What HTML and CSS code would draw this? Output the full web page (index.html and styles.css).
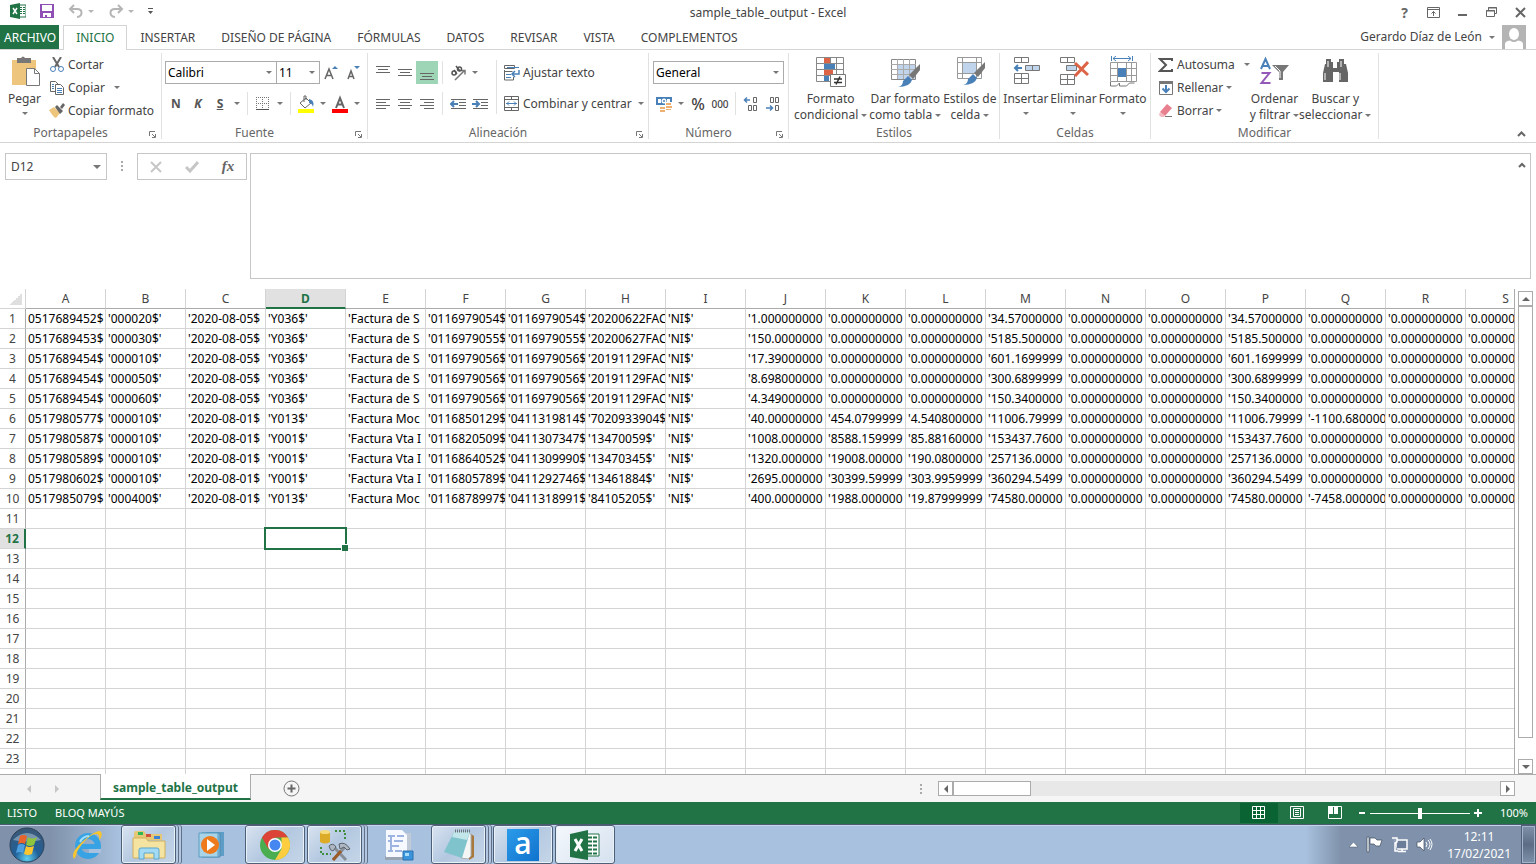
FILE: index.html
```html
<!DOCTYPE html>
<html lang="es">
<head>
    <meta charset="UTF-8">
    <meta name="viewport" content="width=device-width, initial-scale=1.0">
    <title>sample_table_output - Excel</title>
    <link rel="stylesheet" href="styles.css">
</head>
<body>
    <header class="titlebar">
        <div class="quick">
            <svg width="16" height="16" viewBox="0 0 16 16"><path d="M9 2h7v12H9z" fill="#fff" stroke="#217346"/><path d="M10 4.500h5M10 6.500h5M10 8.500h5M10 10.500h5" stroke="#217346" stroke-dasharray="2 1"/><path d="M0 2l10-2v16L0 14z" fill="#217346"/><path d="M3 5l4 6M7 5l-4 6" stroke="#fff" stroke-width="1.500"/></svg>
            <button class="quick-save" aria-label="Guardar"><svg width="14" height="14" viewBox="0 0 14 14"><path d="M0 0h14v14H0z" fill="#8f4fb5"/><path d="M2 1h10v6H2zM3 9h8v4H7v-2H5v2H3z" fill="#fff"/></svg></button>
            <button class="quick-undo" aria-label="Deshacer"><svg width="16" height="14" viewBox="0 0 16 14"><path d="M6 1L2 5l4 4M2 5h7c6 0 6 7 0 8" fill="none" stroke="#b5b5b5" stroke-width="2"/></svg><i class="caret light"></i></button>
            <button class="quick-redo" aria-label="Rehacer"><svg width="16" height="14" viewBox="0 0 16 14"><path d="M10 1l4 4-4 4M14 5H7c-6 0-6 7 0 8" fill="none" stroke="#b5b5b5" stroke-width="2"/></svg><i class="caret light"></i></button>
            <button class="quick-more" aria-label="Personalizar"><svg width="5" height="6" viewBox="0 0 5 6"><path d="M0 0h5v1H0zM0 3h5L2.500 6z" fill="#555"/></svg></button>
        </div>
        <div class="title">sample_table_output - Excel</div>
        <div class="window-buttons">
            <button class="help" aria-label="Ayuda">?</button>
            <button aria-label="Opciones de la cinta"><svg width="13" height="11" viewBox="0 0 13 11"><path d="M.5.500h12v10H.5zM0 2.500h13M6.500 9V4.500M4.500 6.500l2-2 2 2" fill="none" stroke="#666"/></svg></button>
            <button aria-label="Minimizar"><svg width="11" height="11" viewBox="0 0 11 11"><path d="M1 7h9v2H1z" fill="#666"/></svg></button>
            <button aria-label="Restaurar"><svg width="11" height="11" viewBox="0 0 11 11"><path d="M2.500 3V.5h8v6H8M.5 3.500h8v6h-8zM2 1h9M0 4h9" fill="none" stroke="#666"/></svg></button>
            <button aria-label="Cerrar"><svg width="11" height="11" viewBox="0 0 11 11"><path d="M1 1l9 9M10 1l-9 9" stroke="#666" stroke-width="2"/></svg></button>
        </div>
    </header>

    <nav class="tabs">
        <a href="#" class="file">ARCHIVO</a>
        <a href="#" class="active">INICIO</a>
        <a href="#">INSERTAR</a>
        <a href="#">DISEÑO DE PÁGINA</a>
        <a href="#">FÓRMULAS</a>
        <a href="#">DATOS</a>
        <a href="#">REVISAR</a>
        <a href="#">VISTA</a>
        <a href="#">COMPLEMENTOS</a>
        <button class="account">Gerardo Díaz de León<i class="caret"></i>
            <svg width="24" height="24" viewBox="0 0 24 24"><path d="M0 0h24v24H0z" fill="#b4b4b4"/><ellipse cx="12" cy="9" rx="5" ry="6" fill="#fff"/><path d="M3 24v-5q0-3 5-3.500q4 3 8 0q5 .5 5 3.500v5z" fill="#fff"/></svg>
        </button>
    </nav>

    <main class="ribbon">
        <section class="group clipboard">
            <div class="group-body">
                <button class="big">
                    <svg width="32" height="32" viewBox="0 0 32 32"><path d="M3 4h24v25H3z" fill="#edc57c"/><path d="M8 2h4q2-3 4 0h6v5H8z" fill="#777"/><path d="M17.500 12.500h8l5 5v12h-13z" fill="#fff" stroke="#777"/><path d="M25.500 12.500v5h5" fill="none" stroke="#777"/></svg>
                    <span>Pegar</span><i class="caret"></i>
                </button>
                <div class="list">
                    <button><svg width="16" height="16" viewBox="0 0 16 16"><path d="M4 0l6 10M12 0L6 10" stroke="#666" stroke-width="2"/><circle cx="4" cy="12" r="2.500" fill="none" stroke="#4a80b8"/><circle cx="12" cy="12" r="2.500" fill="none" stroke="#4a80b8"/></svg>Cortar</button>
                    <button><svg width="16" height="16" viewBox="0 0 16 16"><path d="M1.500 1.500h5l3 3v7h-8z" fill="#fff" stroke="#666"/><path d="M6.500 4.500h5l3 3v7h-8z" fill="#fff" stroke="#666"/><path d="M3 4.500h2M3 6.500h2M3 8.500h2M8 8.500h5M8 10.500h5M8 12.500h5" stroke="#4a80b8"/></svg>Copiar<i class="caret wide"></i></button>
                    <button><svg width="16" height="16" viewBox="0 0 16 16"><path d="M0 7l5-3 6 6-4 5q-3-1-7-8z" fill="#edc57c"/><path d="M6 4l2-2 6 6-3 3zM11 4l3-4 2 2-3 4z" fill="#666"/></svg>Copiar formato</button>
                </div>
            </div>
            <footer>Portapapeles<button class="launch" aria-label="Más de Portapapeles"><svg width="7" height="7" viewBox="0 0 7 7"><path d="M.5 5V.5H6M3 3l3 3M6.500 3v3.500H3" fill="none" stroke="#777"/></svg></button></footer>
        </section>

        <section class="group font">
            <div class="group-body rows">
                <div class="row">
                    <span class="combo family"><select aria-label="Fuente"><option>Calibri</option></select></span>
                    <span class="combo size"><select aria-label="Tamaño"><option>11</option></select></span>
                    <button class="tool grow" aria-label="Aumentar"><svg width="16" height="16" viewBox="0 0 16 16"><path d="M2 14l4-10 4 10M3 10.500h6" fill="none" stroke="#666" stroke-width="1.500"/><path d="M9 4l3-3 3 3z" fill="#4a80b8"/></svg></button>
                    <button class="tool" aria-label="Disminuir"><svg width="16" height="16" viewBox="0 0 16 16"><path d="M3 14l3-8 3 8M4 11.500h4" fill="none" stroke="#666" stroke-width="1.500"/><path d="M9 1l3 3 3-3z" fill="#4a80b8"/></svg></button>
                </div>
                <div class="row">
                    <button class="tool letter">N</button>
                    <button class="tool letter italic">K</button>
                    <button class="tool letter under">S</button>
                    <i class="caret"></i>
                    <i class="sep"></i>
                    <button class="tool" aria-label="Bordes"><svg width="14" height="14" viewBox="0 0 14 14"><path d="M.5 0v12M6.500 0v12M12.500 0v12M0 .5h13M0 6.500h13" stroke="#777" stroke-dasharray="1 1"/><path d="M0 12.500h13" stroke="#555"/></svg></button>
                    <i class="caret"></i>
                    <i class="sep"></i>
                    <button class="tool" aria-label="Relleno"><svg width="18" height="18" viewBox="0 0 18 18"><path d="M1 14h16v4H1z" fill="#ff0"/><path d="M3 8l6-5 5 5-6 5zM7 7V1h2v4" fill="#fff" stroke="#666"/><path d="M12 4q6 1 4 8q-1-4-4-4z" fill="#4a80b8"/></svg></button>
                    <i class="caret"></i>
                    <button class="tool" aria-label="Color de fuente"><svg width="18" height="18" viewBox="0 0 18 18"><path d="M1 14h16v4H1z" fill="red"/><path d="M5 13L9 3l4 10M6 9.500h6" fill="none" stroke="#666" stroke-width="2"/></svg></button>
                    <i class="caret"></i>
                </div>
            </div>
            <footer>Fuente<button class="launch" aria-label="Más de Fuente"><svg width="7" height="7" viewBox="0 0 7 7"><path d="M.5 5V.5H6M3 3l3 3M6.500 3v3.500H3" fill="none" stroke="#777"/></svg></button></footer>
        </section>

        <section class="group align">
            <div class="group-body">
                <div class="rows">
                    <div class="row">
                        <button class="tool" aria-label="Superior"><svg width="14" height="14" viewBox="0 0 14 14"><path d="M0 .5h14M2 3.500h10M0 6.500h14" stroke="#666"/></svg></button>
                        <button class="tool" aria-label="Medio"><svg width="14" height="14" viewBox="0 0 14 14"><path d="M0 3.500h14M2 6.500h10M0 9.500h14" stroke="#666"/></svg></button>
                        <button class="tool on" aria-label="Inferior"><svg width="14" height="14" viewBox="0 0 14 14"><path d="M0 7.500h14M2 10.500h10M0 13.500h14" stroke="#666"/></svg></button>
                        <i class="sep"></i>
                        <button class="tool" aria-label="Orientación"><svg width="17" height="16" viewBox="0 0 17 16"><path d="M5 15L14 6M11 5.500h4v4" fill="none" stroke="#777" stroke-width="1.500"/><circle cx="4" cy="8" r="2" fill="none" stroke="#555" stroke-width="1.500"/><path d="M4 5l3 4M6 1l4 5" stroke="#555" stroke-width="1.500"/><circle cx="9.500" cy="4" r="2" fill="none" stroke="#555" stroke-width="1.500"/></svg></button>
                        <i class="caret"></i>
                    </div>
                    <div class="row">
                        <button class="tool" aria-label="Izquierda"><svg width="14" height="14" viewBox="0 0 14 14"><path d="M0 2.500h14M0 5.500h10M0 8.500h14M0 11.500h10" stroke="#666"/></svg></button>
                        <button class="tool" aria-label="Centro"><svg width="14" height="14" viewBox="0 0 14 14"><path d="M0 2.500h14M2 5.500h10M0 8.500h14M2 11.500h10" stroke="#666"/></svg></button>
                        <button class="tool" aria-label="Derecha"><svg width="14" height="14" viewBox="0 0 14 14"><path d="M0 2.500h14M4 5.500h10M0 8.500h14M4 11.500h10" stroke="#666"/></svg></button>
                        <i class="sep"></i>
                        <button class="tool" aria-label="Disminuir sangría"><svg width="16" height="14" viewBox="0 0 16 14"><path d="M1 2.500h15M9 5.500h7M9 8.500h7M1 11.500h15" stroke="#666"/><path d="M8 7H1M4 4L1 7l3 3" fill="none" stroke="#4a80b8" stroke-width="2"/></svg></button>
                        <button class="tool" aria-label="Aumentar sangría"><svg width="16" height="14" viewBox="0 0 16 14"><path d="M1 2.500h15M9 5.500h7M9 8.500h7M1 11.500h15" stroke="#666"/><path d="M0 7h7M4 4l3 3-3 3" fill="none" stroke="#4a80b8" stroke-width="2"/></svg></button>
                    </div>
                </div>
                <i class="sep tall"></i>
                <div class="rows">
                    <button class="row wide-tool"><svg width="16" height="16" viewBox="0 0 16 16"><path d="M.5.500h10v3H.5zM.5 6.500h8M.5 5v10h9v-3" fill="none" stroke="#666"/><path d="M3 2.500h12M2 9.500h5M2 12.500h5" stroke="#4a80b8"/><path d="M15 5v4H9M11 6L8 9l3 3" fill="none" stroke="#4a80b8" stroke-width="1.500"/></svg>Ajustar texto</button>
                    <button class="row wide-tool"><svg width="16" height="16" viewBox="0 0 16 16"><path d="M.5.500h14v14H.5zM0 3.500h15M0 11.500h15M7.500 0v3M7.500 12v3" fill="none" stroke="#666"/><path d="M2 7.500h11M5 5.500l-2 2 2 2M10 5.500l2 2-2 2" fill="none" stroke="#4a80b8"/></svg>Combinar y centrar<i class="caret wide"></i></button>
                </div>
            </div>
            <footer>Alineación<button class="launch" aria-label="Más de Alineación"><svg width="7" height="7" viewBox="0 0 7 7"><path d="M.5 5V.5H6M3 3l3 3M6.500 3v3.500H3" fill="none" stroke="#777"/></svg></button></footer>
        </section>

        <section class="group number">
            <div class="group-body rows">
                <div class="row">
                    <span class="combo format"><select aria-label="Formato de número"><option>General</option></select></span>
                </div>
                <div class="row">
                    <button class="tool" aria-label="Moneda"><svg width="17" height="16" viewBox="0 0 17 16"><path d="M0 1h16v8H0z" fill="#4a80b8"/><path d="M2 3h3v4H2zM11 3h3v4h-3z" fill="#fff"/><circle cx="8" cy="5" r="2.500" fill="#fff"/><circle cx="8" cy="5" r="1" fill="#4a80b8"/><path d="M9 6h8v10H9zM3 10h7v6H3z" fill="#fff"/><path d="M10 7h5v2h-5zM10 10h6v2h-6zM10 13h5v1h-5zM4 11h5v2H4zM4 14h5v2H4z" fill="#edb070"/></svg></button>
                    <i class="caret"></i>
                    <button class="tool percent">%</button>
                    <button class="tool thousands">000</button>
                    <i class="sep"></i>
                    <button class="tool" aria-label="Aumentar decimales"><svg width="16" height="16" viewBox="0 0 16 16"><path d="M7 4H1M4 1.500L1.500 4 4 6.500" fill="none" stroke="#4a80b8" stroke-width="1.500"/><path d="M10.500 1.500h3v5h-3zM5.500 9.500h3v5h-3zM10.500 9.500h3v5h-3z" fill="none" stroke="#666"/></svg></button>
                    <button class="tool" aria-label="Disminuir decimales"><svg width="16" height="16" viewBox="0 0 16 16"><path d="M1 12h7M5 9.500L7.500 12 5 14.500" fill="none" stroke="#4a80b8" stroke-width="1.500"/><path d="M5.500 1.500h3v5h-3zM10.500 1.500h3v5h-3zM10.500 9.500h3v5h-3z" fill="none" stroke="#666"/></svg></button>
                </div>
            </div>
            <footer>Número<button class="launch" aria-label="Más de Número"><svg width="7" height="7" viewBox="0 0 7 7"><path d="M.5 5V.5H6M3 3l3 3M6.500 3v3.500H3" fill="none" stroke="#777"/></svg></button></footer>
        </section>

        <section class="group styles">
            <div class="group-body">
                <button class="big">
                    <svg width="32" height="32" viewBox="0 0 32 32"><path d="M1.500 1.500h27v24h-27zM1 7.500h27M1 13.500h27M1 19.500h27M9.500 1v24M15.500 1v24M21.500 1v24" fill="#fff" stroke="#888"/><path d="M9 2h6v5H9zM9 14h9v5H9z" fill="#dc6345"/><path d="M9 8h11v5H9zM9 20h5v5H9z" fill="#4a80b8"/><path d="M15.500 18.500h15v12h-15z" fill="#fff" stroke="#777"/><path d="M19 23h8M19 26.500h8M25 20.500l-4 8" stroke="#333" stroke-width="1.500"/></svg>
                    <span>Formato<br>condicional<i class="caret"></i></span>
                </button>
                <button class="big">
                    <svg width="32" height="32" viewBox="0 0 32 32"><path d="M2.500 3.500h24v20h-24z" fill="#fff" stroke="#888"/><path d="M8 8h18v15H8z" fill="#c0d4ec"/><path d="M2 8.500h25M2 13.500h25M2 18.500h25M8.500 3v20M14.500 3v20M20.500 3v20" stroke="#aaa"/><path d="M31 8v6l-7 9-4-4z" fill="#777"/><path d="M19 20l4 4q-2 7-14 7q5-1 5-6z" fill="#4a80b8"/></svg>
                    <span>Dar formato<br>como tabla<i class="caret"></i></span>
                </button>
                <button class="big">
                    <svg width="32" height="32" viewBox="0 0 32 32"><path d="M3.500 1.500h24v21h-24zM3 6.500h25M3 17.500h25M8.500 1v21M22.500 1v21" fill="#fff" stroke="#999"/><path d="M9 7h13v10H9z" fill="#c0d4ec"/><path d="M31 6v6l-7 9-4-4z" fill="#777"/><path d="M19 18l4 4q-2 7-14 7q5-1 5-6z" fill="#4a80b8"/></svg>
                    <span>Estilos de<br>celda<i class="caret"></i></span>
                </button>
            </div>
            <footer>Estilos</footer>
        </section>

        <section class="group cells">
            <div class="group-body">
                <button class="big">
                    <svg width="32" height="32" viewBox="0 0 32 32"><path d="M4.500 1.500h14v5h-14zM11.500 1v5M4.500 17.500h14v10h-14zM4 22.500h15M11.500 17v11" fill="none" stroke="#777"/><path d="M15.500 9.500h14v5h-14z" fill="#c0d4ec" stroke="#777"/><path d="M22.500 9v6" stroke="#777"/><path d="M12 12H5M8 9l-3 3 3 3" fill="none" stroke="#4a80b8" stroke-width="2"/></svg>
                    <span>Insertar</span><i class="caret"></i>
                </button>
                <button class="big">
                    <svg width="32" height="32" viewBox="0 0 32 32"><path d="M3.500 1.500h14v5h-14zM10.500 1v5M3.500 18.500h14v10h-14zM3 23.500h15M10.500 18v11" fill="none" stroke="#777"/><path d="M9.500 9.500h10v5h-10z" fill="#c0d4ec" stroke="#777"/><path d="M18 7l13 12M31 6L18 20" stroke="#dc6345" stroke-width="3"/></svg>
                    <span>Eliminar</span><i class="caret"></i>
                </button>
                <button class="big">
                    <svg width="32" height="32" viewBox="0 0 32 32"><path d="M3.500 6.500h26v19h-26zM3 12.500h26M3 19.500h26M10.500 6v19M19.500 6v19M24.500 6v19" fill="none" stroke="#999"/><path d="M11 12h8v9h-8z" fill="#4a80b8"/><path d="M4.500 0v5M25.500 0v5M6 2.500h18M9 0L6 2.500 9 5M21 0l3 2.500L21 5" fill="none" stroke="#4a80b8"/><path d="M3.500 26v4h6l3-3v3h7l3-3h5" fill="none" stroke="#777"/></svg>
                    <span>Formato</span><i class="caret"></i>
                </button>
            </div>
            <footer>Celdas</footer>
        </section>

        <section class="group edit">
            <div class="group-body">
                <div class="list">
                    <button><svg width="16" height="16" viewBox="0 0 16 16"><path d="M14 4V2H2l6 6-6 6h12v-2" fill="none" stroke="#555" stroke-width="2"/></svg>Autosuma<i class="caret wide"></i></button>
                    <button><svg width="16" height="16" viewBox="0 0 16 16"><path d="M1.500 1.500h13v13h-13z" fill="#fff" stroke="#777"/><path d="M1 1h14v3H1z" fill="#777"/><path d="M8 5v7M4.500 8.500L8 12l3.500-3.500" fill="none" stroke="#4a80b8" stroke-width="2"/></svg>Rellenar<i class="caret"></i></button>
                    <button><svg width="16" height="16" viewBox="0 0 16 16"><path d="M9 1l5 4-7 8-5-4z" fill="#e8808f"/><path d="M2 9l5 4-1 1H3L1 12z" fill="#f3b8c0"/><path d="M7 13.500h7" stroke="#777"/></svg>Borrar<i class="caret"></i></button>
                </div>
                <button class="big">
                    <svg width="32" height="32" viewBox="0 0 32 32"><path d="M3 13L7.500 3 12 13M5 10h6" fill="none" stroke="#4a80b8" stroke-width="2"/><path d="M3.500 17h8l-8 10h9" fill="none" stroke="#9459b8" stroke-width="2"/><path d="M14 9h17l-6 7v8h-4v-8z" fill="#777"/><path d="M17 10l5 5v7" fill="none" stroke="#fff"/></svg>
                    <span>Ordenar<br>y filtrar<i class="caret"></i></span>
                </button>
                <button class="big">
                    <svg width="32" height="32" viewBox="0 0 32 32"><path d="M7 3h5v3h2v6h4V6h2V3h5v5h2l2 9v9h-9v-10h-6v10H4v-9l2-9h1z" fill="#666"/><path d="M9 5v6M6 17v7M22 5v6M21 17v7" stroke="#fff"/></svg>
                    <span>Buscar y<br>seleccionar<i class="caret"></i></span>
                </button>
            </div>
            <footer>Modificar</footer>
        </section>
        <button class="collapse" aria-label="Contraer la cinta"><svg width="9" height="6" viewBox="0 0 9 6"><path d="M1 5l3.500-3.500L8 5" fill="none" stroke="#666" stroke-width="2"/></svg></button>
    </main>

    <section class="formula">
        <span class="namebox"><input type="text" value="D12" aria-label="Cuadro de nombres"><i class="caret large"></i></span>
        <span class="dots"></span>
        <div class="formula-buttons">
            <button aria-label="Cancelar"><svg width="12" height="12" viewBox="0 0 12 12"><path d="M1 1l10 10M11 1L1 11" stroke="#c6c6c6" stroke-width="2"/></svg></button>
            <button aria-label="Introducir"><svg width="14" height="12" viewBox="0 0 14 12"><path d="M1 6l4 4 8-9" fill="none" stroke="#c6c6c6" stroke-width="3"/></svg></button>
            <button class="fx">fx</button>
        </div>
        <div class="formula-input">
            <textarea aria-label="Barra de fórmulas"></textarea>
            <button aria-label="Contraer"><svg width="8" height="6" viewBox="0 0 8 6"><path d="M1 5l3-3 3 3" fill="none" stroke="#666" stroke-width="2"/></svg></button>
        </div>
    </section>

    <section class="sheet">
        <div class="grid">
            <table>
                <thead><tr id="columns"></tr></thead>
                <tbody id="cells"></tbody>
            </table>
        </div>
        <div class="scroll vertical">
            <button aria-label="Arriba"><i class="arrow up"></i></button>
            <span class="thumb"></span>
            <span class="track"></span>
            <button aria-label="Abajo"><i class="arrow down"></i></button>
        </div>
    </section>

    <section class="sheetbar">
        <div class="sheet-nav">
            <button aria-label="Hoja anterior"><i class="arrow left pale"></i></button>
            <button aria-label="Hoja siguiente"><i class="arrow right pale"></i></button>
        </div>
        <a href="#" class="sheet-tab">sample_table_output</a>
        <button class="sheet-add" aria-label="Hoja nueva"><svg width="17" height="17" viewBox="0 0 17 17"><circle cx="8.500" cy="8.500" r="7.500" fill="none" stroke="#777"/><path d="M8.500 4.500v8M4.500 8.500h8" stroke="#666" stroke-width="2"/></svg></button>
        <span class="dots"></span>
        <div class="scroll horizontal">
            <button aria-label="Izquierda"><i class="arrow left"></i></button>
            <span class="thumb"></span>
            <span class="track"></span>
            <button aria-label="Derecha"><i class="arrow right"></i></button>
        </div>
    </section>

    <section class="status">
        <span>LISTO</span>
        <span>BLOQ MAYÚS</span>
        <div class="views">
            <button class="on" aria-label="Normal"><svg width="14" height="14" viewBox="0 0 14 14"><path d="M.5.500h12v12H.5zM0 4.500h13M0 8.500h13M4.500 0v13M8.500 0v13" fill="none" stroke="#fff"/></svg></button>
            <button aria-label="Diseño de página"><svg width="14" height="14" viewBox="0 0 14 14"><path d="M.5.500h13v12H.5zM3.500 2.500h7v8h-7zM5 4.500h4M5 6.500h4M5 8.500h4" fill="none" stroke="#fff"/></svg></button>
            <button aria-label="Salto de página"><svg width="14" height="14" viewBox="0 0 14 14"><path d="M.5.500h13v12H.5z" fill="none" stroke="#fff"/><path d="M0 0h5v8H0zM6 0h4v8H6z" fill="#fff"/></svg></button>
        </div>
        <div class="zoom-box">
            <button aria-label="Alejar"><svg width="8" height="8" viewBox="0 0 8 8"><path d="M1 3h6v2H1z" fill="#fff"/></svg></button>
            <input class="zoom" type="range" min="0" max="100" value="50" aria-label="Zoom">
            <button aria-label="Acercar"><svg width="8" height="8" viewBox="0 0 8 8"><path d="M0 3h8v2H0zM3 0h2v8H3z" fill="#fff"/></svg></button>
        </div>
        <span>100%</span>
    </section>

    <footer class="taskbar">
        <button class="start" aria-label="Inicio">
            <svg width="36" height="36" viewBox="0 0 36 36"><defs><radialGradient id="orb" cx=".5" cy=".9" r=".9"><stop offset="0" stop-color="#5fd0f0"/><stop offset=".4" stop-color="#20609a"/><stop offset="1" stop-color="#3d5874"/></radialGradient></defs><circle cx="18" cy="18" r="17" fill="url(#orb)" stroke="#2b4058"/><path d="M4 13q14-14 28 0q-14 3-28 0z" fill="#fff" opacity=".35"/><path d="M11 9q3-2 7 0l-2 8q-3-2-7 0z" fill="#e8642c"/><path d="M19 10q4 3 9 0l-3 8q-4 2-8 0z" fill="#8fc43f"/><path d="M9 18q3-2 7 0l-2 8q-3-2-7 0z" fill="#4e9fe0"/><path d="M17 19q3 2 8 0l-2 8q-4 2-8 0z" fill="#fbc52f"/></svg>
        </button>
        <button class="task" aria-label="Internet Explorer">
            <svg width="32" height="32" viewBox="0 0 32 32"><circle cx="17" cy="17" r="10" fill="none" stroke="#38a3e4" stroke-width="6"/><path d="M10 15h18v5H10z" fill="#38a3e4"/><path d="M18 20h12v4H18z" fill="#a8c1de"/><path d="M3 30q-4-6 8-17T29 2q4 3-1 10q1-6-2-7q-5-1-13 8T5 27z" fill="#f7c52e"/><path d="M9 13q3-6 9-6" fill="none" stroke="#a6e0fa" stroke-width="2"/></svg>
        </button>
        <button class="task open stack" aria-label="Explorador">
            <svg width="34" height="32" viewBox="0 0 34 32"><path d="M2 4q0-2 2-2h8l2 3h16v6H2z" fill="#e4c877"/><path d="M6 3h5v3H6z" fill="#2fb457"/><path d="M14 5h5v3h-5z" fill="#d2503c"/><path d="M22 7h6v3h-6z" fill="#3c82d2"/><path d="M1 9h13l2 3h17v16q0 1-1 1H2q-1 0-1-1z" fill="#f4e3a1" stroke="#d0b05c"/><path d="M7 30V21q0-2 2-2h16q2 0 2 2v9h-5v-6H12v6z" fill="#a3dbf5" stroke="#5ba6cc"/></svg>
        </button>
        <button class="task" aria-label="Reproductor">
            <svg width="30" height="28" viewBox="0 0 30 28"><path d="M8 1h18v24H8z" fill="#5e9dc6"/><path d="M4 2h18v24H4z" fill="#88bfdd" stroke="#4d8ab2"/><path d="M1 2h19v24H1z" fill="#a9d4e8" stroke="#5a9cc2"/><circle cx="12" cy="14" r="9" fill="#ee7a1c"/><path d="M9 8l8 6-8 6z" fill="#fff"/></svg>
        </button>
        <button class="task open" aria-label="Chrome">
            <svg width="30" height="30" viewBox="0 0 30 30"><circle cx="15" cy="15" r="15" fill="#4aae50"/><path d="M2 7.500A15 15 0 0 1 28 7.500H15L8.500 19z" fill="#dc4437"/><path d="M28 7.500A15 15 0 0 1 15 30l6.500-11V7.500z" fill="#fccd3f"/><circle cx="15" cy="15" r="7" fill="#fff"/><circle cx="15" cy="15" r="5.500" fill="#4586f1"/></svg>
        </button>
        <button class="task open stack" aria-label="Herramientas">
            <svg width="32" height="34" viewBox="0 0 32 34"><path d="M1 4v10q5 3 10 0V4z" fill="#dcab27"/><ellipse cx="6" cy="4" rx="5" ry="2" fill="#f6dc7c"/><path d="M16 3h10v10M2 19v7h10" fill="none" stroke="#3e8e3e" stroke-width="2" stroke-dasharray="2 2"/><path d="M13 17l14 15M27 18L14 32" stroke="#888e98" stroke-width="3"/><path d="M10 18q4-4 7 1l-3 4q-3 0-4-5zM20 16q6-3 11 5l-3 1-3-3-4 2z" fill="#aeb6c2" stroke="#5a626e"/><path d="M22 23L14 32" stroke="#9c5a28" stroke-width="3"/></svg>
        </button>
        <button class="task" aria-label="Documento">
            <svg width="30" height="32" viewBox="0 0 30 32"><path d="M1 27h24v4H1z" fill="#9aa5b4"/><path d="M22 4h5v24h-5z" fill="#c0c9d6"/><path d="M2 1h16l5 5v22H2z" fill="#f6f9ff"/><path d="M4 7h7M13 7h7M4 12h4M10 12h9M7 17h8M4 22h5M11 22h7M7 7v15" fill="none" stroke="#9db4e0" stroke-width="2"/><path d="M19 22h10v9H19z" fill="#3b95dc" stroke="#2871b0"/><path d="M21 24h4v3h-4z" fill="#a8dcf8"/></svg>
        </button>
        <button class="task open stack" aria-label="Bloc de notas">
            <svg width="32" height="32" viewBox="0 0 32 32"><path d="M28 5l3 2v21l-5 3z" fill="#a8783c"/><path d="M24 4l4 1v22l-3 3-7-1z" fill="#f4f6f6" stroke="#a8b0b4"/><path d="M11 3h16l-8 26-18-6z" fill="#7fc3cc"/><path d="M11 3h16l-3 8-15-3z" fill="#c2e6ea"/><path d="M12 2h15" stroke="#68777c" stroke-width="3" stroke-dasharray="1 1"/></svg>
        </button>
        <button class="task open"><span class="app-a">a</span></button>
        <button class="task open current" aria-label="Excel">
            <svg width="30" height="30" viewBox="0 0 30 30"><path d="M16 4h13v22H16z" fill="#fff" stroke="#217346"/><path d="M18 7.500h9M18 11.500h9M18 15.500h9M18 19.500h9M18 23.500h9" stroke="#217346" stroke-width="2" stroke-dasharray="4 1"/><path d="M0 4l18-4v30L0 27z" fill="#217346"/><path d="M5 9l7 12M12 9L5 21" stroke="#fff" stroke-width="3"/></svg>
        </button>
        <div class="tray">
            <button aria-label="Iconos ocultos"><svg width="9" height="6" viewBox="0 0 9 6"><path d="M0 5l4.500-5L9 5z" fill="#fff" stroke="#44546a" stroke-width=".5"/></svg></button>
            <button aria-label="Centro de actividades"><svg width="17" height="17" viewBox="0 0 17 17"><path d="M1 1h2v15H1zM4 2h5l2 2h5l-2 6h-4L8 8H4z" fill="#fff" stroke="#3d4b60" stroke-width=".7"/></svg></button>
            <button aria-label="Red"><svg width="17" height="17" viewBox="0 0 17 17"><path d="M5 4h11v9H5zM7 15.500h8M11 13v2" fill="#6b7d98" stroke="#fff" stroke-width="1.500"/><path d="M1 2h5v4l-2 1v8h3" fill="#8fa0b8" stroke="#fff" stroke-width="1.500"/></svg></button>
            <button aria-label="Volumen"><svg width="17" height="17" viewBox="0 0 17 17"><path d="M1 6h3l4-4v13l-4-4H1z" fill="#fff" stroke="#3d4b60" stroke-width=".7"/><path d="M10 6q2 2.500 0 5M12 4q4 4 0 9M14 3q4 5 0 11" fill="none" stroke="#fff"/></svg></button>
        </div>
        <div class="clock">12:11<br>17/02/2021</div>
        <button class="desktop" aria-label="Mostrar escritorio"></button>
    </footer>
    <script src="script.js"></script>
</body>
</html>
```

FILE: styles.css
```css
* {
    box-sizing: border-box;
}
body {
    display: flex;
    flex-direction: column;
    height: 100vh;
    margin: 0;
    overflow: hidden;
    font-family: "Noto Sans", "Open Sans", sans-serif;
    font-size: 12px;
    line-height: 16px;
    color: #444;
    background-color: #fff;
}
button, input, select, textarea {
    margin: 0;
    padding: 0;
    border: none;
    background: none;
    font: inherit;
    color: inherit;
}
button {
    display: flex;
    align-items: center;
    justify-content: center;
}
a {
    color: inherit;
    text-decoration: none;
}
svg {
    display: block;
    flex: none;
}

/* small drop-down arrows */
.caret {
    flex: none;
    display: inline-block;
    border: 3px solid transparent;
    border-top-color: #777;
    border-bottom: none;
    vertical-align: middle;
}
.caret.light {
    border-top-color: #b5b5b5;
}
.caret.large {
    border-width: 4px;
    border-bottom: none;
}
.caret.wide {
    margin-left: 6px;
}

/* title bar */
.titlebar {
    flex: none;
    display: grid;
    grid-template-columns: 1fr auto 1fr;
    align-items: center;
    height: 25px;
}
.quick {
    display: flex;
    align-items: center;
    gap: 14px;
    padding-left: 10px;
    padding-bottom: 3px;
}
.quick-undo, .quick-redo {
    gap: 4px;
}
.window-buttons {
    display: flex;
    justify-content: flex-end;
    padding-right: 1px;
}
.window-buttons button {
    width: 29px;
    height: 20px;
}
.window-buttons .help {
    font-size: 14px;
    font-weight: bold;
    color: #666;
}

/* ribbon tabs */
.tabs {
    flex: none;
    display: flex;
    height: 25px;
    border-bottom: 1px solid #d4d4d4;
}
.tabs a {
    padding: 5px 13px 0;
    height: 24px;
}
.tabs .file {
    padding: 5px 3px 0 4px;
    margin-right: 4px;
    background-color: #217346;
    color: #fff;
}
.tabs .active {
    height: 25px;
    padding: 4px 12px 0;
    border: 1px solid #d4d4d4;
    border-bottom: none;
    background-color: #fff;
    color: #217346;
}
.account {
    margin-left: auto;
    padding-right: 10px;
    gap: 7px;
}

/* ribbon */
.ribbon {
    flex: none;
    display: flex;
    height: 93px;
    border-bottom: 1px solid #d4d4d4;
}
.group {
    display: flex;
    flex-direction: column;
    justify-content: space-between;
    margin: 3px 0;
    border-right: 1px solid #e1e1e1;
}
.clipboard {
    width: 162px;
}
.font {
    width: 206px;
}
.align {
    width: 281px;
}
.number {
    width: 140px;
}
.styles {
    width: 211px;
}
.cells {
    width: 151px;
}
.edit {
    width: 228px;
}
.group-body {
    display: flex;
    height: 72px;
}
.group footer {
    position: relative;
    padding-right: 20px;
    line-height: 12px;
    text-align: center;
    color: #666;
}
.styles footer, .cells footer, .edit footer {
    padding-right: 0;
}
.launch {
    position: absolute;
    right: 5px;
    top: 4px;
}
.big {
    flex-direction: column;
    justify-content: flex-start;
    padding-top: 3px;
    white-space: nowrap;
}
.big span {
    margin-top: 3px;
}
.big > .caret {
    margin-top: 5px;
}
.big span .caret {
    margin-left: 3px;
}
.clipboard .big {
    width: 49px;
}
.list button {
    height: 23px;
    gap: 3px;
    white-space: nowrap;
}
.rows {
    display: flex;
    flex-direction: column;
    gap: 8px;
    padding-top: 8px;
}
.row {
    display: flex;
    align-items: center;
    height: 23px;
}
.row > .caret {
    margin: 0 3px;
}
.tool {
    flex: none;
    width: 22px;
    height: 23px;
}
.on {
    background-color: #9fd5b7;
}
.sep {
    flex: none;
    width: 1px;
    height: 23px;
    margin: 0 4px;
    background-color: #e1e1e1;
}
.sep.tall {
    height: 54px;
    margin: 7px 7px 0 1px;
}
.combo {
    position: relative;
    height: 23px;
    border: 1px solid #ababab;
    color: #000;
}
.combo select {
    width: 100%;
    height: 100%;
    padding-left: 2px;
    appearance: none;
}
.combo::after {
    content: "";
    position: absolute;
    right: 4px;
    top: 9px;
    border: 3px solid transparent;
    border-top-color: #777;
    border-bottom: none;
}
.family {
    width: 112px;
}
.size {
    width: 43px;
    border-left: none;
}
.format {
    width: 131px;
}
.font .group-body {
    padding-left: 3px;
}
.letter {
    font-weight: bold;
    color: #555;
}
.italic {
    font-style: italic;
}
.under {
    text-decoration: underline;
}
.align .group-body {
    padding-left: 4px;
}
.align .rows:first-child {
    width: 123px;
}
.wide-tool {
    gap: 3px;
    justify-content: flex-start;
    white-space: nowrap;
}
.number .group-body {
    padding-left: 4px;
}
.percent {
    font-size: 16px;
    font-weight: 500;
}
.thousands {
    font-size: 10px;
    font-weight: 500;
}
.styles .group-body {
    padding-left: 5px;
    gap: 2px;
}
.cells .group-body {
    justify-content: center;
    gap: 2px;
}
.edit .group-body {
    padding-left: 7px;
}
.list button {
    justify-content: flex-start;
}
.collapse {
    margin-left: auto;
    align-self: flex-end;
    padding: 5px 10px;
}

/* formula bar */
.formula {
    flex: none;
    display: flex;
    align-items: flex-start;
    height: 146px;
    padding: 10px 5px;
}
.namebox {
    display: flex;
    align-items: center;
    width: 102px;
    height: 27px;
    padding: 0 5px;
    border: 1px solid #c6c6c6;
}
.namebox input {
    flex: 1;
    min-width: 0;
}
.dots {
    width: 2px;
    height: 10px;
    background: repeating-linear-gradient(#aaa 0 2px, transparent 2px 4px);
}
.formula .dots {
    margin: 8px 14px;
}
.formula-buttons {
    display: flex;
    width: 110px;
    height: 27px;
    margin-right: 3px;
    border: 1px solid #c6c6c6;
}
.formula-buttons button {
    flex: 1;
}
.formula-buttons .fx {
    font: italic bold 15px "Liberation Serif", serif;
    color: #666;
}
.formula-input {
    flex: 1;
    display: flex;
    align-items: flex-start;
    height: 126px;
    border: 1px solid #c6c6c6;
}
.formula-input textarea {
    flex: 1;
    height: 100%;
    resize: none;
}
.formula-input button {
    padding: 8px 4px;
}

/* sheet */
.sheet {
    flex: 1;
    min-height: 0;
    display: flex;
}
.grid {
    flex: 1;
    min-width: 0;
    overflow: hidden;
    border-right: 1px solid #ababab;
    color: #000;
}
table {
    width: 1546px;
    table-layout: fixed;
    border-collapse: separate;
    border-spacing: 0;
}
th, td {
    width: 80px;
    height: 20px;
    padding: 1px 0 0 2px;
    border-right: 1px solid #d4d4d4;
    border-bottom: 1px solid #d4d4d4;
    line-height: 18px;
    text-align: left;
    white-space: nowrap;
    overflow: hidden;
}
th {
    padding: 1px 0 0;
    font-weight: normal;
    text-align: center;
    color: #444;
}
thead th {
    padding: 0;
    border-bottom-color: #ababab;
}
th:first-child {
    width: 26px;
    border-right-color: #ababab;
}
thead th:first-child {
    border-right-color: #d4d4d4;
    border-bottom-color: #d4d4d4;
    background: linear-gradient(135deg, transparent 50%, #dfdfdf 50%) 10px 4px / 12px 12px no-repeat;
}
th.current {
    background-color: #e1e1e1;
    color: #217346;
    font-weight: bold;
}
thead th.current {
    border-bottom: 2px solid #217346;
    line-height: 17px;
}
tbody th.current {
    border-right: 2px solid #217346;
}
td.selected {
    position: relative;
    overflow: visible;
}
td.selected::before {
    content: "";
    position: absolute;
    inset: -2px;
    border: 2px solid #217346;
}
td.selected::after {
    content: "";
    position: absolute;
    right: -3px;
    bottom: -3px;
    width: 6px;
    height: 6px;
    border: 1px solid #fff;
    border-right: none;
    border-bottom: none;
    background-color: #217346;
}

/* scroll bars */
.scroll {
    display: flex;
}
.scroll button {
    flex: none;
    width: 15px;
    height: 15px;
    border: 1px solid #ababab;
    background-color: #fff;
}
.thumb {
    border: 1px solid #ababab;
    background-color: #fff;
}
.vertical {
    flex-direction: column;
    width: 15px;
    margin: 2px 3px 0;
}
.vertical .thumb {
    flex: 20;
}
.vertical .track {
    flex: 1;
}
.horizontal {
    width: 577px;
    background-color: #e8e8e8;
}
.horizontal .thumb {
    width: 78px;
}
.horizontal .track {
    flex: 1;
}
.arrow {
    border: 4px solid transparent;
}
.up {
    border-bottom-color: #666;
    border-top: none;
}
.down {
    border-top-color: #666;
    border-bottom: none;
}
.left {
    border-right-color: #666;
    border-left: none;
}
.right {
    border-left-color: #666;
    border-right: none;
}
.left.pale {
    border-right-color: #c6c6c6;
}
.right.pale {
    border-left-color: #c6c6c6;
}

/* sheet tabs */
.sheetbar {
    flex: none;
    display: flex;
    align-items: center;
    height: 28px;
    padding-right: 21px;
    border-top: 1px solid #ababab;
    background-color: #f5f5f5;
}
.sheet-nav {
    display: flex;
    gap: 24px;
    width: 100px;
    padding-left: 27px;
}
.sheet-tab {
    align-self: flex-start;
    height: 26px;
    margin-top: -1px;
    padding: 6px 12px 0;
    border: 1px solid #ababab;
    border-top: none;
    border-bottom: 2px solid #217346;
    background-color: #fff;
    color: #217346;
    font-weight: bold;
}
.sheet-add {
    margin-left: 32px;
}
.sheetbar .dots {
    margin: 0 16px 0 auto;
}

/* status bar */
.status {
    flex: none;
    display: flex;
    align-items: center;
    gap: 18px;
    height: 22px;
    padding: 0 8px 0 7px;
    background-color: #217346;
    color: #fff;
    font-size: 11px;
}
.views {
    display: flex;
    height: 20px;
    margin-left: auto;
}
.views button {
    width: 38px;
}
.views .on {
    background-color: #0a6332;
}
.zoom-box {
    display: flex;
    align-items: center;
    gap: 4px;
    margin-left: -14px;
}
.zoom {
    width: 100px;
    height: 12px;
    appearance: none;
    background: linear-gradient(#fff, #fff) center / 100% 1px no-repeat;
}
.zoom::-webkit-slider-thumb {
    appearance: none;
    width: 4px;
    height: 11px;
    background-color: #fff;
}

/* task bar */
.taskbar {
    flex: none;
    display: flex;
    align-items: stretch;
    height: 40px;
    border-top: 1px solid #4c5b70;
    box-shadow: inset 0 1px #c5d5e8;
    background: linear-gradient(90deg, #8092ab, #8092ab 50px, #a8c1de 120px, #a8c1de calc(100% - 230px), #8092ab calc(100% - 195px));
}
.start {
    width: 54px;
}
.task {
    width: 60px;
    margin-right: 2px;
    border-radius: 3px;
}
.start + .task {
    width: 65px;
}
.task.open {
    border: 1px solid #4e5f78;
    background: linear-gradient(135deg, #d8e3f0, #b3c8e0 50%, #c6d6e8);
    box-shadow: inset 0 0 0 1px #e8f0f8;
}
.task.stack {
    width: 55px;
    margin-right: 7px;
    box-shadow: inset 0 0 0 1px #e8f0f8, 2px 0 #b3c8e0, 3px 0 #5f7088, 5px 0 #b3c8e0, 6px 0 #5f7088;
}
.task.current {
    background: linear-gradient(135deg, #f4f8fc, #d5e1ef);
}
.app-a {
    width: 32px;
    height: 32px;
    background: linear-gradient(135deg, #2a9bea, #1173cc);
    color: #fff;
    font: 600 30px/27px "Open Sans", sans-serif;
}
.tray {
    display: flex;
    align-items: center;
    gap: 8px;
    margin-left: auto;
}
.clock {
    margin: 3px 10px 0 14px;
    color: #fff;
    line-height: 17px;
    text-align: center;
}
.desktop {
    width: 15px;
    border: 1px solid #526178;
    background: linear-gradient(#8092ab, #5b6c84 50%, #8092ab);
    box-shadow: inset 0 0 0 1px #a3b3c8;
}
```

FILE: script.js
```js
const columns = "ABCDEFGHIJKLMNOPQRS".split("");
const zero = "'0.000000000";

const rows = [
    ["0517689452$", "'000020$'", "'2020-08-05$", "'Y036$'", "'Factura de S", "'0116979054$", "'0116979054$", "'20200622FAC", "'NI$'", "'1.000000000", zero, zero, "'34.57000000", zero, zero, "'34.57000000", zero, zero, zero],
    ["0517689453$", "'000030$'", "'2020-08-05$", "'Y036$'", "'Factura de S", "'0116979055$", "'0116979055$", "'20200627FAC", "'NI$'", "'150.0000000", zero, zero, "'5185.500000", zero, zero, "'5185.500000", zero, zero, zero],
    ["0517689454$", "'000010$'", "'2020-08-05$", "'Y036$'", "'Factura de S", "'0116979056$", "'0116979056$", "'20191129FAC", "'NI$'", "'17.39000000", zero, zero, "'601.1699999", zero, zero, "'601.1699999", zero, zero, zero],
    ["0517689454$", "'000050$'", "'2020-08-05$", "'Y036$'", "'Factura de S", "'0116979056$", "'0116979056$", "'20191129FAC", "'NI$'", "'8.698000000", zero, zero, "'300.6899999", zero, zero, "'300.6899999", zero, zero, zero],
    ["0517689454$", "'000060$'", "'2020-08-05$", "'Y036$'", "'Factura de S", "'0116979056$", "'0116979056$", "'20191129FAC", "'NI$'", "'4.349000000", zero, zero, "'150.3400000", zero, zero, "'150.3400000", zero, zero, zero],
    ["0517980577$", "'000010$'", "'2020-08-01$", "'Y013$'", "'Factura Moc", "'0116850129$", "'0411319814$", "'7020933904$", "'NI$'", "'40.00000000", "'454.0799999", "'4.540800000", "'11006.79999", zero, zero, "'11006.79999", "'-1100.680000", zero, zero],
    ["0517980587$", "'000010$'", "'2020-08-01$", "'Y001$'", "'Factura Vta I", "'0116820509$", "'0411307347$", "'13470059$'", "'NI$'", "'1008.000000", "'8588.159999", "'85.88160000", "'153437.7600", zero, zero, "'153437.7600", zero, zero, zero],
    ["0517980589$", "'000010$'", "'2020-08-01$", "'Y001$'", "'Factura Vta I", "'0116864052$", "'0411309990$", "'13470345$'", "'NI$'", "'1320.000000", "'19008.00000", "'190.0800000", "'257136.0000", zero, zero, "'257136.0000", zero, zero, zero],
    ["0517980602$", "'000010$'", "'2020-08-01$", "'Y001$'", "'Factura Vta I", "'0116805789$", "'0411292746$", "'13461884$'", "'NI$'", "'2695.000000", "'30399.59999", "'303.9959999", "'360294.5499", zero, zero, "'360294.5499", zero, zero, zero],
    ["0517985079$", "'000400$'", "'2020-08-01$", "'Y013$'", "'Factura Moc", "'0116878997$", "'0411318991$", "'84105205$'", "'NI$'", "'400.0000000", "'1988.000000", "'19.87999999", "'74580.00000", zero, zero, "'74580.00000", "'-7458.000000", zero, zero]
];

const head = document.getElementById("columns");
head.innerHTML = "<th></th>" + columns.map(c => `<th class="${c === "D" ? "current" : ""}">${c}</th>`).join("");

const body = document.getElementById("cells");
for (let n = 1; n <= 24; n++) {
    const values = rows[n - 1] || [];
    const row = body.insertRow();
    row.innerHTML = `<th class="${n === 12 ? "current" : ""}">${n}</th>` +
        columns.map((c, i) => `<td class="${n === 12 && c === "D" ? "selected" : ""}">${values[i] || ""}</td>`).join("");
}
```
